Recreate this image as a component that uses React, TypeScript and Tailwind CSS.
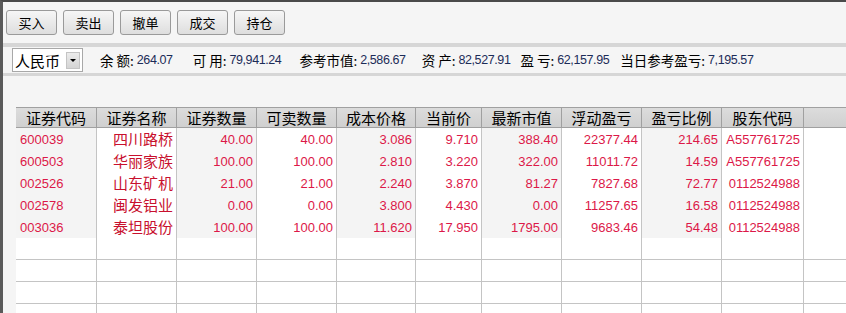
import React from 'react';

const cjk = { fontFamily: '"Noto Sans CJK SC", sans-serif' };
const num = { fontFamily: '"Liberation Sans", "Noto Sans CJK SC", sans-serif' };

const buttons = ['买入', '卖出', '撤单', '成交', '持仓'];

const info = [
  { label: '余 额:', value: '264.07', gap: 'ml-0' },
  { label: '可 用:', value: '79,941.24', gap: 'ml-[20px]' },
  { label: '参考市值:', value: '2,586.67', gap: 'ml-[18px]' },
  { label: '资 产:', value: '82,527.91', gap: 'ml-[16px]' },
  { label: '盈 亏:', value: '62,157.95', gap: 'ml-[10px]' },
  { label: '当日参考盈亏:', value: '7,195.57', gap: 'ml-[11px]' },
];

const headers = ['证券代码', '证券名称', '证券数量', '可卖数量', '成本价格', '当前价', '最新市值', '浮动盈亏', '盈亏比例', '股东代码'];

const rows = [
  ['600039', '四川路桥', '40.00', '40.00', '3.086', '9.710', '388.40', '22377.44', '214.65', 'A557761725'],
  ['600503', '华丽家族', '100.00', '100.00', '2.810', '3.220', '322.00', '11011.72', '14.59', 'A557761725'],
  ['002526', '山东矿机', '21.00', '21.00', '2.240', '3.870', '81.27', '7827.68', '72.77', '0112524988'],
  ['002578', '闽发铝业', '0.00', '0.00', '3.800', '4.430', '0.00', '11257.65', '16.58', '0112524988'],
  ['003036', '泰坦股份', '100.00', '100.00', '11.620', '17.950', '1795.00', '9683.46', '54.48', '0112524988'],
];

const cols = 'grid grid-cols-[81px_80px_80px_80px_79px_66px_80px_80px_80px_82px_1fr]';

export default function App() {
  return (
    <div className="w-[846px] h-[313px] overflow-hidden bg-[#f5f5f5] border-t-2 border-t-[#4a4a4a] border-l-[3px] border-l-[#5a5a5a] flex flex-col">
      {/* Toolbar */}
      <div className="h-[41px] shrink-0 flex items-start pt-[8px] pl-[3px] gap-[6px]">
        {buttons.map(b => (
          <button
            key={b}
            className="w-[51px] h-[25px] rounded-[3px] border border-[#9a9a9a] bg-gradient-to-b from-[#f6f6f6] to-[#dedede] text-[13px] text-black flex items-center justify-center"
            style={cjk}
          >
            {b}
          </button>
        ))}
      </div>
      <div className="h-[4px] shrink-0 bg-[#d6d6d6]" />

      {/* Account info */}
      <div className="h-[26px] shrink-0 flex items-center pl-[9px]">
        <div className="w-[71px] h-[24px] bg-white border border-[#a8a8a8] flex items-center justify-between pl-[2px] pr-[2px]">
          <span className="text-[15px] leading-none text-black" style={cjk}>人民币</span>
          <span className="w-[14px] h-[17px] bg-gradient-to-b from-[#ececec] to-[#d4d4d4] border border-[#c4c4c4] flex items-center justify-center">
            <span className="w-0 h-0 border-l-[3px] border-r-[3px] border-t-[3px] border-l-transparent border-r-transparent border-t-black" />
          </span>
        </div>
        <div className="flex items-center ml-[17px]">
          {info.map(i => (
            <div key={i.label} className={`flex items-center whitespace-nowrap ${i.gap}`}>
              <span className="text-[13.5px] text-black" style={cjk}>{i.label}</span>
              <span className="ml-[3px] text-[12.5px] text-[#1c2c58] tracking-[-0.4px]" style={num}>{i.value}</span>
            </div>
          ))}
        </div>
      </div>
      <div className="h-[3px] shrink-0 bg-[#d6d6d6]" />

      {/* Holdings table */}
      <div className="flex-1 pt-[31px] pl-[13px]">
        <div className="bg-white">
          <div className={`${cols} h-[21px] border-t border-[#a0a0a0] bg-gradient-to-b from-[#dcdcdc] to-[#cfcfcf]`}>
            {headers.map(h => (
              <div
                key={h}
                className="border-r border-b border-[#a0a0a0] flex items-center justify-center text-[15px] text-black leading-none"
                style={cjk}
              >
                {h}
              </div>
            ))}
            <div className="border-b border-[#a0a0a0]" />
          </div>
          {rows.map(r => (
            <div key={r[0]} className={`${cols} h-[22px]`}>
              {r.map((c, ci) => (
                <div
                  key={ci}
                  className={`border-r border-b border-[#c4c4c4] flex items-center whitespace-nowrap ${
                    ci % 2 === 0 ? 'bg-[#f4f4f4]' : 'bg-white'
                  } ${ci === 0 ? 'justify-start pl-[4px]' : 'justify-end pr-[3px]'} ${
                    ci === 1 ? 'text-[15px] text-[#c8102e]' : 'text-[13px] text-[#dc1848]'
                  } ${ci === 9 ? 'pr-[2px]' : ''}`}
                  style={ci === 1 ? cjk : num}
                >
                  {c}
                </div>
              ))}
              <div className="border-b border-[#c4c4c4] bg-white" />
            </div>
          ))}
          {[0, 1, 2, 3].map(e => (
            <div key={e} className={`${cols} h-[22px]`}>
              {headers.map(h => (
                <div key={h} className="border-r border-b border-[#c4c4c4] bg-white" />
              ))}
              <div className="border-b border-[#c4c4c4] bg-white" />
            </div>
          ))}
        </div>
      </div>
    </div>
  );
}
